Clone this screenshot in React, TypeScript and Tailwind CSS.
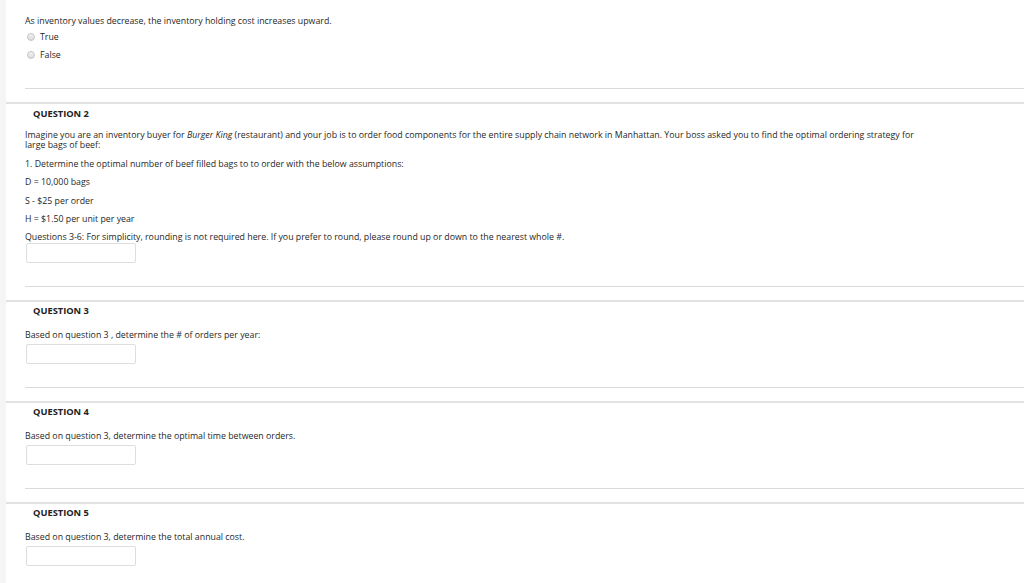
import React from "react";

const font = { fontFamily: '"Open Sans", "Liberation Sans", sans-serif' };

function Radio({ label }: { label: string }) {
  return (
    <div className="flex h-[18px] items-center">
      <span className="ml-[2px] inline-block h-[8px] w-[8px] rounded-full border border-[#c4c4c4] bg-gradient-to-b from-[#f2f2f2] to-[#dcdcdc]" />
      <span className="ml-[5px] leading-[11px]">{label}</span>
    </div>
  );
}

function Input({ top = "mt-[4px]" }: { top?: string }) {
  return <div className={`ml-[1px] ${top} h-[20px] w-[110px] rounded-[2px] border border-[#dedede] bg-white`} />;
}

function Heading({ n }: { n: number }) {
  return <div className="ml-[8px] text-[9.3px] font-bold leading-[11px] text-[#222]">QUESTION {n}</div>;
}

function SimpleQuestion({ n, text }: { n: number; text: string }) {
  return (
    <div className="border-t-2 border-[#e2e2e2] pt-[3px]">
      <div className="pl-[19px]">
        <Heading n={n} />
        <div className="mt-[14px] leading-[11px]">{text}</div>
        <Input top="mt-[3px]" />
        <div className="mt-[23px] border-t border-[#dadada]" />
      </div>
      <div className="h-[13px]" />
    </div>
  );
}

export default function App() {
  return (
    <div className="flex min-h-[583px] w-full bg-white text-[8.8px] text-[#1f1f1f]" style={font}>
      <div className="w-[6px] shrink-0 bg-[#f5f5f5]" />
      <div className="flex-1">
        {/* Question 1 remnant */}
        <div className="pl-[19px] pt-[16px]">
          <div className="leading-[11px]">
            As inventory values decrease, the inventory holding cost increases upward.
          </div>
          <div className="mt-[1px]">
            <Radio label="True" />
            <Radio label="False" />
          </div>
          <div className="mt-[24px] border-t border-[#dadada]" />
        </div>
        <div className="h-[13px]" />

        {/* Question 2 */}
        <div className="border-t-2 border-[#e2e2e2] pt-[4px]">
          <div className="pl-[19px]">
            <Heading n={2} />
            <div className="mt-[11px] leading-[10px]">
              Imagine you are an inventory buyer for <i>Burger King</i> (restaurant) and your job is to order food
              components for the entire supply chain network in Manhattan. Your boss asked you to find the optimal
              ordering strategy for
              <br />
              large bags of beef:
            </div>
            <div className="mt-[9px] leading-[11px]">
              1. Determine the optimal number of beef filled bags to to order with the below assumptions:
            </div>
            <div className="mt-[7px] leading-[11px]">D = 10,000 bags</div>
            <div className="mt-[8px] leading-[11px]">S - $25 per order</div>
            <div className="mt-[7px] leading-[11px]">H = $1.50 per unit per year</div>
            <div className="mt-[7px] leading-[11px]">
              Questions 3-6: For simplicity, rounding is not required here. If you prefer to round, please round up or
              down to the nearest whole #.
            </div>
            <Input top="mt-0" />
            <div className="mt-[23px] border-t border-[#dadada]" />
          </div>
          <div className="h-[13px]" />
        </div>

        <SimpleQuestion n={3} text="Based on question 3 , determine the # of orders per year:" />
        <SimpleQuestion n={4} text="Based on question 3, determine the optimal time between orders." />
        <SimpleQuestion n={5} text="Based on question 3, determine the total annual cost." />
      </div>
    </div>
  );
}
